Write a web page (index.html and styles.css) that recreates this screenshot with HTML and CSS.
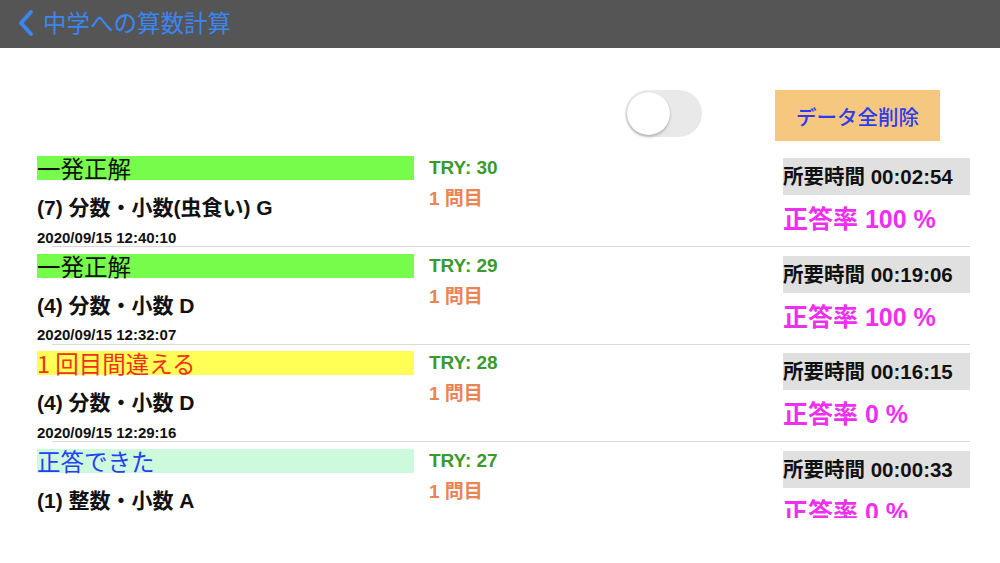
FILE: index.html
```html
<!DOCTYPE html>
<html lang="ja">
  <head>
    <meta charset="UTF-8">
    <meta name="viewport" content="width=device-width, initial-scale=1.0">
    <title>中学への算数計算</title>
    <link rel="stylesheet" href="styles.css">
  </head>
  <body>
    <header class="navbar">
      <svg class="back" width="18" height="28" viewBox="0 0 18 28">
        <path d="M14 3 L4 14 L14 25" fill="none" stroke="#3a86f3" stroke-width="4" stroke-linecap="round" stroke-linejoin="round"/>
      </svg>
      <span class="nav-title">中学への算数計算</span>
    </header>

    <div class="toolbar">
      <div class="switch"><div class="knob"></div></div>
      <button class="delete-btn">データ全削除</button>
    </div>

    <div class="list">
      <div class="row">
        <div class="col-main">
          <div class="badge badge-first">一発正解</div>
          <div class="title">(7) 分数・小数(虫食い) G</div>
          <div class="date">2020/09/15 12:40:10</div>
        </div>
        <div class="col-try">
          <div class="try">TRY: 30</div>
          <div class="qnum">1 問目</div>
        </div>
        <div class="col-stat">
          <div class="elapsed">所要時間 00:02:54</div>
          <div class="rate">正答率 100 %</div>
        </div>
      </div>

      <div class="row">
        <div class="col-main">
          <div class="badge badge-first">一発正解</div>
          <div class="title">(4) 分数・小数 D</div>
          <div class="date">2020/09/15 12:32:07</div>
        </div>
        <div class="col-try">
          <div class="try">TRY: 29</div>
          <div class="qnum">1 問目</div>
        </div>
        <div class="col-stat">
          <div class="elapsed">所要時間 00:19:06</div>
          <div class="rate">正答率 100 %</div>
        </div>
      </div>

      <div class="row">
        <div class="col-main">
          <div class="badge badge-miss">1 回目間違える</div>
          <div class="title">(4) 分数・小数 D</div>
          <div class="date">2020/09/15 12:29:16</div>
        </div>
        <div class="col-try">
          <div class="try">TRY: 28</div>
          <div class="qnum">1 問目</div>
        </div>
        <div class="col-stat">
          <div class="elapsed">所要時間 00:16:15</div>
          <div class="rate">正答率 0 %</div>
        </div>
      </div>

      <div class="row">
        <div class="col-main">
          <div class="badge badge-ok">正答できた</div>
          <div class="title">(1) 整数・小数 A</div>
        </div>
        <div class="col-try">
          <div class="try">TRY: 27</div>
          <div class="qnum">1 問目</div>
        </div>
        <div class="col-stat">
          <div class="elapsed">所要時間 00:00:33</div>
          <div class="rate">正答率 0 %</div>
        </div>
      </div>
    </div>
  </body>
</html>
```

FILE: styles.css
```css
body {
  margin: 0;
  width: 1000px;
  height: 563px;
  overflow: hidden;
  background: #fff;
  font-family: "Liberation Sans", "Noto Sans CJK JP", sans-serif;
  color: #111;
}

.navbar {
  height: 48px;
  background: #555555;
  display: flex;
  align-items: center;
  padding-left: 17px;
  box-sizing: border-box;
}
.back {
  display: block;
  margin-right: 8px;
  margin-top: -2px;
}
.nav-title {
  font-family: "Noto Sans CJK JP", sans-serif;
  font-size: 23.5px;
  color: #3a86f3;
  line-height: 28px;
  margin-top: -4px;
}

.toolbar {
  height: 101.5px;
  box-sizing: border-box;
  padding: 42px 60px 0 0;
  display: flex;
  justify-content: flex-end;
  align-items: flex-start;
  gap: 73px;
}
.switch {
  width: 77px;
  height: 47px;
  border-radius: 24px;
  background: #e9e9e9;
  padding: 2px;
  box-sizing: border-box;
}
.knob {
  width: 43px;
  height: 43px;
  border-radius: 50%;
  background: #fff;
  box-shadow: 0 2px 3px rgba(0, 0, 0, 0.22), 0 0 1px rgba(0, 0, 0, 0.15);
}
.delete-btn {
  width: 165px;
  height: 51px;
  border: none;
  background: #f6c77f;
  color: #2b3cf0;
  font-family: "Noto Sans CJK JP", sans-serif;
  font-size: 20.5px;
  font-weight: 500;
  padding: 0;
}

.list {
  height: 368.5px;
  overflow: hidden;
}
.row {
  height: 97.67px;
  box-sizing: border-box;
  padding-left: 37px;
  display: grid;
  grid-template-columns: 377px 339px 187px;
  column-gap: 15px;
  background: linear-gradient(#d9d9d9, #d9d9d9) 52px 100% / 918px 1px no-repeat;
}

.badge {
  margin-top: 6.5px;
  height: 24px;
  line-height: 24px;
  font-family: "Noto Sans CJK JP", sans-serif;
  font-size: 23.5px;
  white-space: nowrap;
}
.badge-first {
  background: #77fc4c;
  color: #111;
}
.badge-miss {
  background: #ffff55;
  color: #f2301f;
}
.badge-ok {
  background: #cdf9dc;
  color: #2540f2;
}
.title {
  margin-top: 14px;
  line-height: 28px;
  font-size: 21px;
  font-weight: bold;
  white-space: nowrap;
}
.date {
  margin-top: 5.5px;
  line-height: 20px;
  font-size: 15px;
  font-weight: bold;
}

.try {
  margin-top: 6.5px;
  line-height: 24px;
  font-size: 19px;
  font-weight: bold;
  color: #3a9a2c;
}
.qnum {
  margin-top: 7px;
  line-height: 24px;
  font-size: 19px;
  font-weight: bold;
  color: #ea8453;
}

.elapsed {
  margin-top: 8.5px;
  height: 37px;
  line-height: 37px;
  background: #e0e0e0;
  font-size: 20.5px;
  font-weight: bold;
  white-space: nowrap;
}
.rate {
  margin-top: 9px;
  line-height: 30px;
  font-size: 25px;
  font-weight: bold;
  color: #f02ef0;
  white-space: nowrap;
}
```
